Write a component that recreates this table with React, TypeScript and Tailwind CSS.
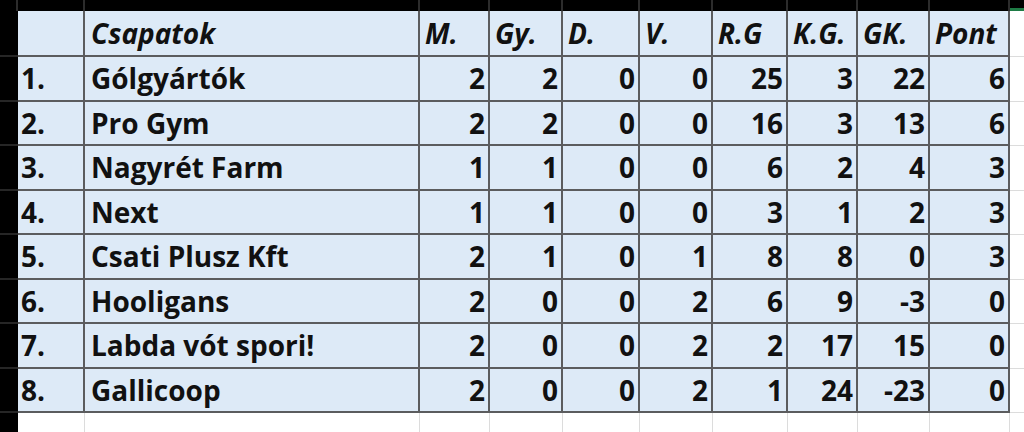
import React from "react";

const headers = ["M.", "Gy.", "D.", "V.", "R.G", "K.G.", "GK.", "Pont"];

const rows: [string, string, number[]][] = [
  ["1.", "Gólgyártók", [2, 2, 0, 0, 25, 3, 22, 6]],
  ["2.", "Pro Gym", [2, 2, 0, 0, 16, 3, 13, 6]],
  ["3.", "Nagyrét Farm", [1, 1, 0, 0, 6, 2, 4, 3]],
  ["4.", "Next", [1, 1, 0, 0, 3, 1, 2, 3]],
  ["5.", "Csati Plusz Kft", [2, 1, 0, 1, 8, 8, 0, 3]],
  ["6.", "Hooligans", [2, 0, 0, 2, 6, 9, -3, 0]],
  ["7.", "Labda vót spori!", [2, 0, 0, 2, 2, 17, 15, 0]],
  ["8.", "Gallicoop", [2, 0, 0, 2, 1, 24, -23, 0]],
];

const cell = "flex items-center border-r-2 border-b-2 border-[#5b5c5e] bg-[#ddeaf7] overflow-hidden whitespace-nowrap";

export default function App() {
  return (
    <div
      className="w-[1024px] h-[432px] overflow-hidden bg-white text-[#111] font-bold text-[28px] leading-none"
      style={{ fontFamily: "'Open Sans', Lato, sans-serif" }}
    >
      <div className="grid h-full grid-cols-[18px_67px_335px_70px_73px_77px_73px_75px_70px_72px_80px_1fr] grid-rows-[11px_46px_repeat(8,44.5px)_1fr]">
        {/* top bar */}
        {Array.from({ length: 11 }).map((_, i) => (
          <div key={"t" + i} className="bg-black border-r-2 border-[#2c2c2c]" />
        ))}
        <div className="bg-black relative">
          <div className="absolute left-0 right-0 bottom-0 h-[3px] bg-[#1e7b45]" />
        </div>

        {/* header */}
        <div className="bg-black border-b-2 border-[#262626]" />
        <div className={cell} />
        <div className={cell + " pl-[6px] italic"}>Csapatok</div>
        {headers.map((h) => (
          <div key={h} className={cell + " pl-[5px] italic"}>
            {h}
          </div>
        ))}
        <div className="bg-white border-b border-[#dcdcdc]" />

        {/* body */}
        {rows.map(([pos, name, nums]) => (
          <React.Fragment key={pos}>
            <div className="bg-black border-b-2 border-[#262626]" />
            <div className={cell + " pl-[3px]"}>{pos}</div>
            <div className={cell + " pl-[6px]"}>{name}</div>
            {nums.map((n, j) => (
              <div key={j} className={cell + " justify-end pr-[3px]"}>
                {n}
              </div>
            ))}
            <div className="bg-white border-b border-[#dcdcdc]" />
          </React.Fragment>
        ))}

        {/* empty bottom row */}
        <div className="bg-black" />
        {Array.from({ length: 10 }).map((_, i) => (
          <div key={"b" + i} className="bg-white border-r border-[#dcdcdc]" />
        ))}
        <div className="bg-white" />
      </div>
    </div>
  );
}
